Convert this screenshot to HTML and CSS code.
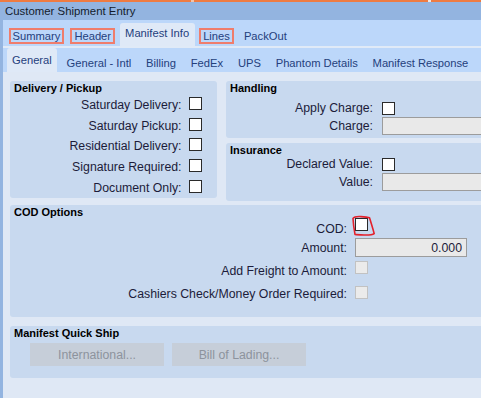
FILE: index.html
```html
<!DOCTYPE html>
<html lang="en">
<head>
  <meta charset="UTF-8">
  <meta name="viewport" content="width=device-width, initial-scale=1.0">
  <title>Customer Shipment Entry</title>
  <link rel="stylesheet" href="styles.css">
</head>
<body>
  <div class="topline"></div>
  <header class="titlebar">Customer Shipment Entry</header>
  <div class="frame">
    <nav class="tabs tabs-main">
      <span class="tab"><span class="mark">Summary</span></span>
      <span class="tab"><span class="mark">Header</span></span>
      <span class="tab active">Manifest Info</span>
      <span class="tab"><span class="mark">Lines</span></span>
      <span class="tab">PackOut</span>
    </nav>
    <nav class="tabs tabs-sub">
      <span class="tab active">General</span>
      <span class="tab">General - Intl</span>
      <span class="tab">Billing</span>
      <span class="tab">FedEx</span>
      <span class="tab">UPS</span>
      <span class="tab">Phantom Details</span>
      <span class="tab">Manifest Response</span>
    </nav>

    <main class="content">
      <div class="top-grid">
        <!-- Delivery / Pickup -->
        <section class="group delivery">
          <div class="group-title">Delivery / Pickup</div>
          <div class="fields">
            <span class="label">Saturday Delivery:</span><span class="cb lift"></span>
            <span class="label">Saturday Pickup:</span><span class="cb lift"></span>
            <span class="label">Residential Delivery:</span><span class="cb lift"></span>
            <span class="label">Signature Required:</span><span class="cb lift"></span>
            <span class="label">Document Only:</span><span class="cb lift"></span>
          </div>
        </section>

        <div class="right-col">
          <!-- Handling -->
          <section class="group handling">
            <div class="group-title">Handling</div>
            <div class="fields">
              <span class="label">Apply Charge:</span><span class="cb"></span>
              <span class="label">Charge:</span><input class="textbox" type="text" readonly>
            </div>
          </section>
          <!-- Insurance -->
          <section class="group insurance">
            <div class="group-title">Insurance</div>
            <div class="fields">
              <span class="label">Declared Value:</span><span class="cb"></span>
              <span class="label">Value:</span><input class="textbox" type="text" readonly>
            </div>
          </section>
        </div>
      </div>

      <!-- COD -->
      <section class="group cod">
        <div class="group-title">COD Options</div>
        <div class="fields">
          <span class="label">COD:</span>
          <span class="cod-check">
            <span class="cb"></span>
            <svg class="scribble" width="27" height="24" viewBox="-4 -3 27 24">
              <path d="M-2 0.5 Q-0.5 -1.8 6 -1.4 Q12 -1 14.5 -0.2 Q16.5 6 19.2 15.6 Q17 17.2 9 17 Q2 16.8 0 16.4 Q-1.6 8 -2 0.5Z" fill="none" stroke="#e3212b" stroke-width="1.6" stroke-linejoin="round"/>
            </svg>
          </span>
          <span class="label">Amount:</span><input class="textbox amount" type="text" value="0.000" readonly>
          <span class="label">Add Freight to Amount:</span><span class="cb disabled lift-lg"></span>
          <span class="label">Cashiers Check/Money Order Required:</span><span class="cb disabled lift"></span>
        </div>
      </section>

      <!-- Manifest Quick Ship -->
      <section class="group quick">
        <div class="group-title">Manifest Quick Ship</div>
        <div class="button-row">
          <button class="qs-button" disabled>International...</button>
          <button class="qs-button" disabled>Bill of Lading...</button>
        </div>
      </section>
    </main>
  </div>
</body>
</html>
```

FILE: styles.css
```css
body {
  margin: 0;
  width: 481px;
  height: 398px;
  display: flex;
  flex-direction: column;
  overflow: hidden;
  font-family: "Liberation Sans", Arial, sans-serif;
  font-size: 12.3px;
  background-color: #dfe8f5;
  color: #1c1c3a;
}
.topline {
  height: 2px;
  background: linear-gradient(to right, #ee7b42 191px, #f3c3a8 191px, #f3c3a8 194px, #ee7b42 194px, #ee7b42 428px, #f5e6dc 428px, #f5e6dc 431px, #ee7b42 431px);
}
.titlebar {
  height: 18px;
  line-height: 18px;
  padding-left: 5px;
  background-color: #93b4e0;
  font-size: 11.4px;
  color: #141c2c;
}
.frame {
  flex: 1;
  border-left: 3px solid #93b4e0;
  overflow: hidden;
}
.tabs {
  display: flex;
  background-color: #bcd7fa;
  padding-left: 4px;
}
.tab {
  box-sizing: border-box;
  color: #24407c;
  font-size: 11.2px;
  line-height: 16px;
  white-space: nowrap;
}
.tab.active {
  background-color: #dfe9f7;
  border-radius: 3px 3px 0 0;
}
.tabs-main {
  height: 28px;
  align-items: flex-end;
  gap: 3px;
  border-bottom: 2px solid #e0eaf7;
  box-sizing: border-box;
}
.tabs-main .tab {
  height: 23px;
  padding: 5px 5.5px 0;
}
.tabs-main .tab.active {
  padding-top: 2px;
}
.tabs-sub {
  height: 24px;
  gap: 4.8px;
  padding-left: 4px;
}
.tabs-sub .tab {
  height: 24px;
  padding: 6.5px 5px 0;
}
.tabs-sub .tab.active {
  padding-top: 3.5px;
}
.mark {
  display: inline-block;
  line-height: 12px;
  padding: 0 2px;
  margin: 0 -4px;
  border: 2px solid #ef7d6c;
}
.content {
  width: 530px;
  padding: 9px 0 0 7px;
  display: flex;
  flex-direction: column;
}
.top-grid {
  display: flex;
  gap: 9px;
  align-items: flex-start;
}
.group {
  box-sizing: border-box;
  background-color: #c8d9ef;
  border-radius: 3px;
  padding: 0 4px;
}
.group-title {
  font-weight: bold;
  font-size: 11px;
  line-height: 14px;
  color: #000000;
}
.fields {
  display: grid;
  align-items: center;
}
.label {
  text-align: right;
  white-space: nowrap;
}
.cb {
  display: block;
  width: 13px;
  height: 13px;
  box-sizing: border-box;
  border: 1px solid #2a2a2a;
  background-color: #ffffff;
}
.cb.lift {
  margin-bottom: 3px;
}
.cb.lift-lg {
  margin-bottom: 7px;
}
.cb.disabled {
  border-color: #c2c2c2;
  background-color: #ebebeb;
}
.textbox {
  box-sizing: border-box;
  width: 140px;
  height: 18px;
  margin: 0;
  padding: 0 4px;
  border: 1px solid #9c9c9c;
  background-color: #e9e9e9;
  font-family: inherit;
  font-size: 12.3px;
  color: #1c1c3a;
  outline: none;
}
.delivery {
  width: 207px;
  height: 117px;
}
.delivery .fields {
  grid-template-columns: 167.5px 13px;
  column-gap: 7.5px;
  grid-auto-rows: 20.6px;
}
.right-col {
  display: flex;
  flex-direction: column;
  gap: 5px;
  width: 300px;
}
.handling {
  height: 57px;
}
.insurance {
  height: 58px;
}
.handling .fields,
.insurance .fields {
  grid-template-columns: 143px auto;
  column-gap: 9px;
  grid-auto-rows: 18px;
}
.handling .fields {
  margin-top: 4px;
}
.insurance .fields {
  margin-top: -2px;
}
.cod {
  margin-top: 4px;
  height: 112px;
}
.cod .fields {
  grid-template-columns: 333px auto;
  column-gap: 8px;
  grid-template-rows: 19px 19px 27px 19px;
}
.cod .amount {
  width: 112px;
  height: 19px;
  text-align: right;
}
.cod-check {
  position: relative;
  width: 13px;
  height: 13px;
  margin-bottom: 8px;
}
.scribble {
  position: absolute;
  left: -4px;
  top: -3px;
  overflow: visible;
}
.quick {
  margin-top: 9px;
  height: 52px;
}
.button-row {
  display: flex;
  gap: 8px;
  margin: 3px 0 0 16px;
}
.qs-button {
  width: 134px;
  height: 23px;
  border: none;
  background-color: #c6ced9;
  color: #8d939d;
  font-family: inherit;
  font-size: 12.3px;
  padding: 0;
}
```
